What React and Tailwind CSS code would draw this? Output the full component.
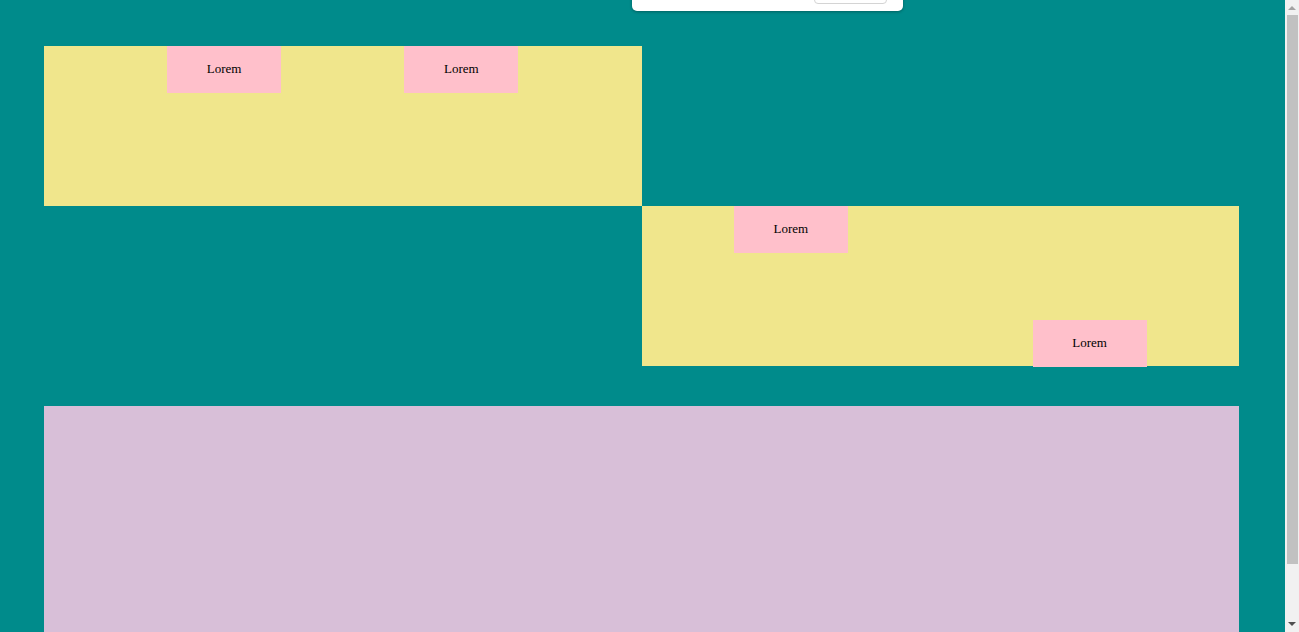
import React from "react";

const Box = ({ className = "" }) => (
  <div className={`w-[114px] h-[47px] bg-[#ffc0cb] flex items-center justify-center pb-[2px] text-[13px] text-black ${className}`}>
    Lorem
  </div>
);

const Scrollbar = () => (
  <div className="w-[14px] shrink-0 h-full bg-[#f1f1f1] flex flex-col items-center">
    <div className="h-[15px] w-full flex items-center justify-center">
      <div className="w-0 h-0 border-l-[4px] border-r-[4px] border-b-[4px] border-l-transparent border-r-transparent border-b-[#a3a3a3]" />
    </div>
    <div className="w-[11px] ml-[2px] self-start h-[549px] bg-[#c1c1c1]" />
    <div className="flex-1" />
    <div className="h-[15px] w-full flex items-center justify-center pb-[2px]">
      <div className="w-0 h-0 border-l-[4px] border-r-[4px] border-t-[4px] border-l-transparent border-r-transparent border-t-[#505050]" />
    </div>
  </div>
);

export default function App() {
  return (
    <div className="h-[632px] flex overflow-hidden bg-[#008b8b]" style={{ fontFamily: '"Liberation Serif", serif' }}>
      <div className="flex-1 relative pt-[46px]">
        {/* top overlay bar */}
        <div className="absolute top-[-10px] left-[632px] w-[271px] h-[21px] bg-white rounded-[5px] shadow-[0_1px_3px_rgba(0,0,0,0.3)]">
          <div className="absolute left-[182px] top-0 w-[73px] h-[14px] rounded-[4px] border border-[#d4d4d4] bg-white" />
        </div>

        <div className="ml-[44px] mr-[46px]">
          <div className="flex">
            <div className="w-1/2 h-[160px] bg-[#f0e68c] flex justify-evenly items-start">
              <Box />
              <Box />
            </div>
          </div>
          <div className="flex justify-end">
            <div className="w-1/2 h-[160px] bg-[#f0e68c] flex justify-around items-start">
              <Box />
              <Box className="self-end translate-y-[1px]" />
            </div>
          </div>
          <div className="mt-[40px] h-[240px] bg-[#d8bfd8]" />
        </div>
      </div>
      <Scrollbar />
    </div>
  );
}
